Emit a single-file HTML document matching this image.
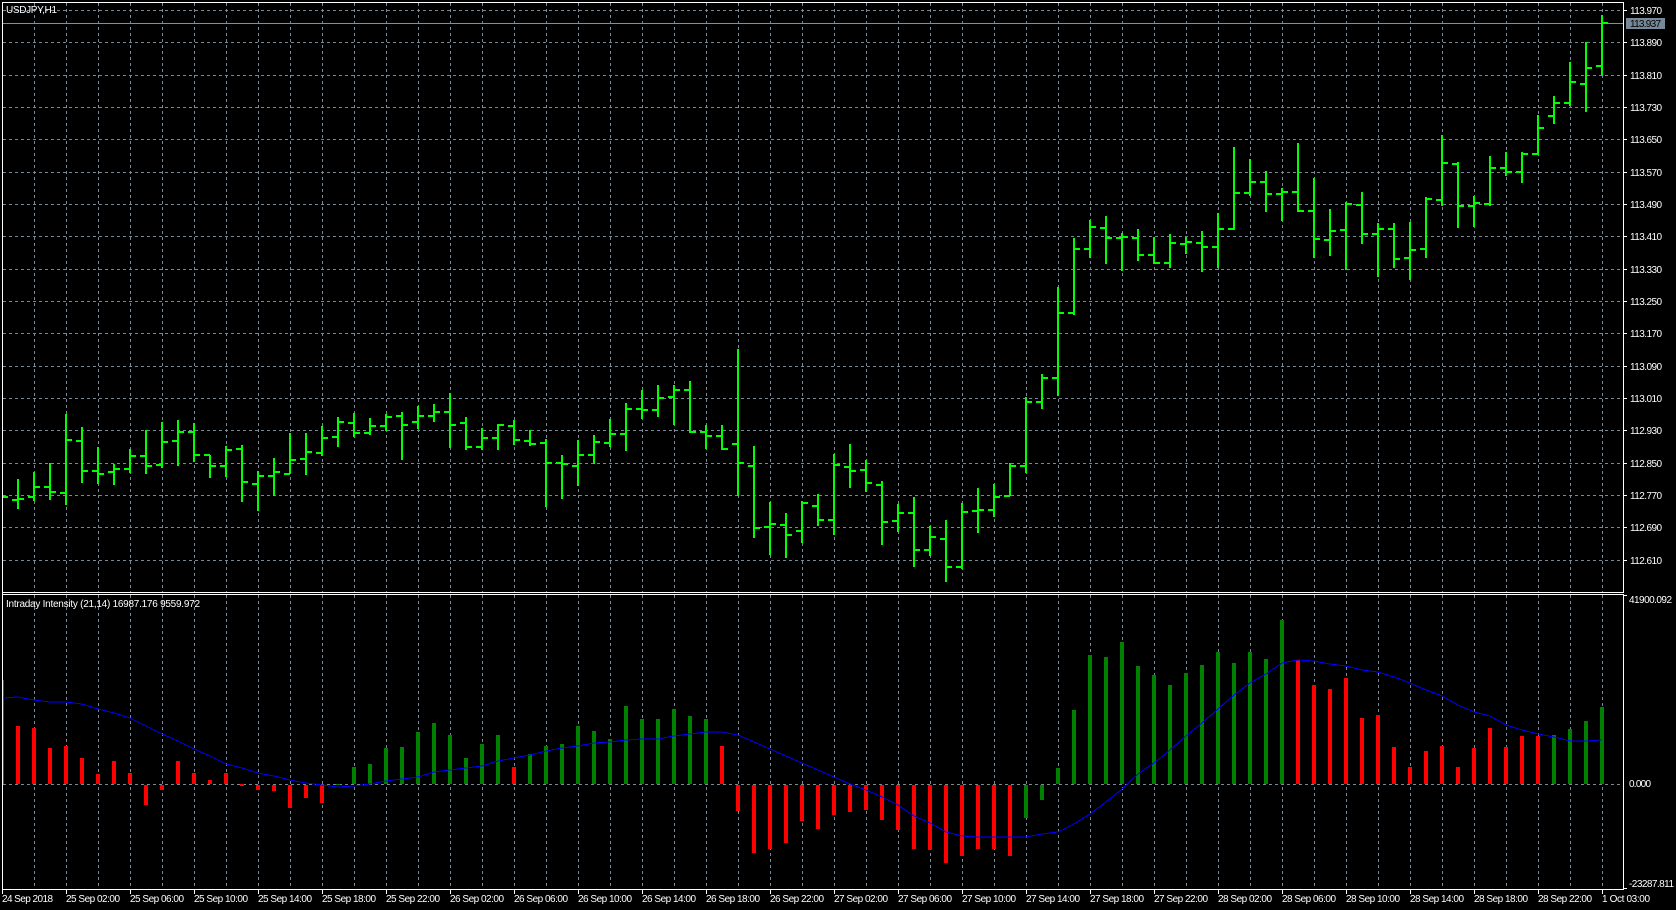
<!DOCTYPE html>
<html>
<head>
<meta charset="utf-8">
<title>USDJPY,H1</title>
<style>
html,body{margin:0;padding:0;background:#000;width:1676px;height:910px;overflow:hidden}
svg{display:block;position:absolute;left:0;top:0}
text{font-family:"Liberation Sans",sans-serif;font-size:10px;fill:#fff}
</style>
</head>
<body>
<svg width="1676" height="910" viewBox="0 0 1676 910" xmlns="http://www.w3.org/2000/svg">
<rect width="1676" height="910" fill="#000"/>

<!-- grid -->
<g shape-rendering="crispEdges" fill="none" stroke="#778899" stroke-width="1" stroke-dasharray="3 3">
<path d="M3 10.5H1623M3 42.5H1623M3 75.5H1623M3 107.5H1623M3 139.5H1623M3 172.5H1623M3 204.5H1623M3 236.5H1623M3 269.5H1623M3 301.5H1623M3 333.5H1623M3 366.5H1623M3 398.5H1623M3 430.5H1623M3 463.5H1623M3 495.5H1623M3 527.5H1623M3 560.5H1623"/>
<path d="M34.5 3V592M66.5 3V592M98.5 3V592M130.5 3V592M162.5 3V592M194.5 3V592M226.5 3V592M258.5 3V592M290.5 3V592M322.5 3V592M354.5 3V592M386.5 3V592M418.5 3V592M450.5 3V592M482.5 3V592M514.5 3V592M546.5 3V592M578.5 3V592M610.5 3V592M642.5 3V592M674.5 3V592M706.5 3V592M738.5 3V592M770.5 3V592M802.5 3V592M834.5 3V592M866.5 3V592M898.5 3V592M930.5 3V592M962.5 3V592M994.5 3V592M1026.5 3V592M1058.5 3V592M1090.5 3V592M1122.5 3V592M1154.5 3V592M1186.5 3V592M1218.5 3V592M1250.5 3V592M1282.5 3V592M1314.5 3V592M1346.5 3V592M1378.5 3V592M1410.5 3V592M1442.5 3V592M1474.5 3V592M1506.5 3V592M1538.5 3V592M1570.5 3V592M1602.5 3V592"/>
<path d="M34.5 595V889M66.5 595V889M98.5 595V889M130.5 595V889M162.5 595V889M194.5 595V889M226.5 595V889M258.5 595V889M290.5 595V889M322.5 595V889M354.5 595V889M386.5 595V889M418.5 595V889M450.5 595V889M482.5 595V889M514.5 595V889M546.5 595V889M578.5 595V889M610.5 595V889M642.5 595V889M674.5 595V889M706.5 595V889M738.5 595V889M770.5 595V889M802.5 595V889M834.5 595V889M866.5 595V889M898.5 595V889M930.5 595V889M962.5 595V889M994.5 595V889M1026.5 595V889M1058.5 595V889M1090.5 595V889M1122.5 595V889M1154.5 595V889M1186.5 595V889M1218.5 595V889M1250.5 595V889M1282.5 595V889M1314.5 595V889M1346.5 595V889M1378.5 595V889M1410.5 595V889M1442.5 595V889M1474.5 595V889M1506.5 595V889M1538.5 595V889M1570.5 595V889M1602.5 595V889"/>
</g>

<!-- bid line -->
<rect x="3" y="23" width="1620" height="1" fill="#8c8c8c" shape-rendering="crispEdges"/>

<!-- price bars -->
<path shape-rendering="crispEdges" fill="none" stroke="#00ff00" stroke-width="2" d="M3 497H8
M18 479V509M12 500H18M18 499H24
M34 472V501M28 497H34M34 487H40
M50 463V500M44 487H50M50 492H56
M66 414V505M60 493H66M66 440H72
M82 427V483M76 441H82M82 471H88
M98 447V484M92 471H98M98 474H104
M114 464V485M108 472H114M114 469H120
M130 449V473M124 469H130M130 456H136
M146 430V474M140 456H146M146 466H152
M162 422V468M156 465H162M162 442H168
M178 420V466M172 441H178M178 432H184
M194 423V462M188 432H194M194 455H200
M210 455V478M204 455H210M210 466H216
M226 446V477M220 466H226M226 450H232
M242 445V502M236 449H242M242 482H248
M258 471V511M252 484H258M258 476H264
M274 458V496M268 476H274M274 472H280
M290 433V474M284 474H290M290 460H296
M306 433V475M300 459H306M306 452H312
M322 426V456M316 453H322M322 438H328
M338 417V447M332 437H338M338 422H344
M354 413V437M348 423H354M354 433H360
M370 418V435M364 433H370M370 426H376
M386 414V431M380 426H386M386 417H392
M402 412V460M396 416H402M402 425H408
M418 406V429M412 422H418M418 416H424
M434 404V422M428 416H434M434 412H440
M450 393V448M444 412H450M450 425H456
M466 417V450M460 423H466M466 447H472
M482 428V450M476 447H482M482 438H488
M498 424V450M492 438H498M498 425H504
M514 420V445M508 426H514M514 440H520
M530 430V446M524 441H530M530 444H536
M546 439V507M540 443H546M546 463H552
M562 455V499M556 463H562M562 464H568
M578 440V486M572 466H578M578 455H584
M594 435V464M588 455H594M594 442H600
M610 419V447M604 443H610M610 434H616
M626 403V451M620 434H626M626 409H632
M642 390V419M636 409H642M642 410H648
M658 385V417M652 410H658M658 398H664
M674 385V425M668 397H674M674 390H680
M690 381V433M684 390H690M690 432H696
M706 425V449M700 432H706M706 436H712
M722 425V450M716 436H722M722 449H728
M738 349V496M732 444H738M738 463H744
M754 446V538M748 466H754M754 528H760
M770 502V555M764 527H770M770 524H776
M786 513V558M780 525H786M786 535H792
M802 501V543M796 531H802M802 503H808
M818 494V526M812 506H818M818 520H824
M834 454V535M828 520H834M834 465H840
M850 444V488M844 467H850M850 471H856
M866 460V492M860 470H866M866 483H872
M882 481V545M876 485H882M882 522H888
M898 504V532M892 521H898M898 513H904
M914 497V567M908 513H914M914 550H920
M930 526V556M924 550H930M930 537H936
M946 520V582M940 539H946M946 567H952
M962 503V569M956 567H962M962 512H968
M978 488V533M972 511H978M978 510H984
M994 484V517M988 510H994M994 497H1000
M1010 463V496M1004 496H1010M1010 466H1016
M1026 397V473M1020 466H1026M1026 402H1032
M1042 374V409M1036 402H1042M1042 378H1048
M1058 287V396M1052 378H1058M1058 313H1064
M1074 238V315M1068 313H1074M1074 249H1080
M1090 220V258M1084 249H1090M1090 227H1096
M1106 216V264M1100 228H1106M1106 238H1112
M1122 233V271M1116 238H1122M1122 237H1128
M1138 229V261M1132 238H1138M1138 255H1144
M1154 237V264M1148 255H1154M1154 263H1160
M1170 234V268M1164 263H1170M1170 243H1176
M1186 237V254M1180 244H1186M1186 242H1192
M1202 231V272M1196 243H1202M1202 247H1208
M1218 213V268M1212 247H1218M1218 229H1224
M1234 147V230M1228 229H1234M1234 193H1240
M1250 159V196M1244 193H1250M1250 182H1256
M1266 171V212M1260 182H1266M1266 194H1272
M1282 188V221M1276 194H1282M1282 192H1288
M1298 143V212M1292 192H1298M1298 211H1304
M1314 178V258M1308 211H1314M1314 239H1320
M1330 209V256M1324 240H1330M1330 231H1336
M1346 202V270M1340 230H1346M1346 204H1352
M1362 192V244M1356 205H1362M1362 234H1368
M1378 223V277M1372 234H1378M1378 229H1384
M1394 223V268M1388 229H1394M1394 259H1400
M1410 222V280M1404 258H1410M1410 250H1416
M1426 197V258M1420 249H1426M1426 199H1432
M1442 135V206M1436 200H1442M1442 163H1448
M1458 162V228M1452 164H1458M1458 206H1464
M1474 196V227M1468 206H1474M1474 203H1480
M1490 156V206M1484 204H1490M1490 168H1496
M1506 152V176M1500 168H1506M1506 172H1512
M1522 152V183M1516 172H1522M1522 154H1528
M1538 115V155M1532 154H1538M1538 128H1544
M1554 96V124M1548 116H1554M1554 103H1560
M1570 62V106M1564 103H1570M1570 82H1576
M1586 42V112M1580 84H1586M1586 68H1592
M1602 15V76M1596 66H1602M1602 23H1608"/>

<!-- zero line -->
<path shape-rendering="crispEdges" fill="none" stroke="#778899" stroke-width="1" stroke-dasharray="3 3" d="M3 784.5H1623"/>

<!-- histogram -->
<path shape-rendering="crispEdges" fill="none" stroke="#ff0000" stroke-width="4" d="M18 784V726M34 784V728M50 784V748M66 784V746M82 784V758M98 784V774M114 784V761M130 784V773M146 785V805M162 785V790M178 784V761M194 784V773M210 784V780M226 784V773M242 784V786M258 785V790M274 785V791M290 785V808M306 785V798M322 785V803M514 784V767M722 784V746M738 785V811M754 785V853M770 785V849M786 785V843M802 785V821M818 785V829M834 785V815M850 785V812M866 785V810M882 785V820M898 785V830M914 785V849M930 785V850M946 785V863M962 785V856M978 785V849M994 785V849M1010 785V856M1298 784V660M1314 784V685M1330 784V689M1346 784V678M1362 784V718M1378 784V715M1394 784V747M1410 784V767M1426 784V751M1442 784V746M1458 784V767M1474 784V748M1490 784V728M1506 784V747M1522 784V736M1538 784V736"/>
<path shape-rendering="crispEdges" fill="none" stroke="#008000" stroke-width="4" d="M338 785V784M354 784V767M370 784V764M386 784V748M402 784V747M418 784V732M434 784V723M450 784V735M466 784V758M482 784V744M498 784V735M530 784V754M546 784V746M562 784V744M578 784V726M594 784V731M610 784V739M626 784V706M642 784V719M658 784V719M674 784V709M690 784V716M706 784V719M1026 785V818M1042 785V800M1058 784V768M1074 784V710M1090 784V655M1106 784V657M1122 784V642M1138 784V666M1154 784V675M1170 784V685M1186 784V673M1202 784V665M1218 784V652M1234 784V663M1250 784V652M1266 784V659M1282 784V620M1554 784V735M1570 784V729M1586 784V721M1602 784V707"/>
<rect x="3" y="680" width="1" height="104" fill="#008000" shape-rendering="crispEdges"/>

<!-- signal line -->
<polyline shape-rendering="crispEdges" fill="none" stroke="#0000ff" stroke-width="1" points="3,698 18,697 34,700 50,702 66,702 82,704 98,709 114,713 130,718 146,726 162,734 178,741 194,749 210,756 226,764 242,768 258,773 274,776 290,780 306,783 322,785 338,787 354,786 370,784 386,781 402,779 418,777 434,772 450,770 466,768 482,766 498,761 514,758 530,755 546,751 562,748 578,746 594,743 610,742 626,740 642,739 658,739 674,736 690,734 706,732 722,732 738,735 754,742 770,749 786,756 802,763 818,770 834,777 850,784 866,790 882,797 898,805 914,816 930,823 946,832 962,836 978,837 994,837 1010,837 1026,837 1042,834 1058,832 1074,824 1090,814 1106,802 1122,789 1138,774 1154,763 1170,750 1186,736 1202,723 1218,709 1234,695 1250,683 1266,674 1282,663 1298,660 1314,661 1330,664 1346,666 1362,670 1378,672 1394,677 1410,683 1426,690 1442,696 1458,705 1474,712 1490,716 1506,725 1522,730 1538,734 1554,737 1570,741 1586,741 1602,740"/>

<!-- frame -->
<g shape-rendering="crispEdges" fill="#fff">
<rect x="2" y="2" width="1622" height="1"/>
<rect x="2" y="2" width="1" height="888"/>
<rect x="1623" y="2" width="1" height="591"/>
<rect x="2" y="592" width="1622" height="1"/>
<rect x="2" y="594" width="1622" height="1"/>
<rect x="1623" y="594" width="1" height="296"/>
<rect x="2" y="889" width="1622" height="1"/>
</g>

<!-- axis ticks -->
<path shape-rendering="crispEdges" fill="none" stroke="#fff" stroke-width="1" d="M1623 10.5h4M1623 42.5h4M1623 75.5h4M1623 107.5h4M1623 139.5h4M1623 172.5h4M1623 204.5h4M1623 236.5h4M1623 269.5h4M1623 301.5h4M1623 333.5h4M1623 366.5h4M1623 398.5h4M1623 430.5h4M1623 463.5h4M1623 495.5h4M1623 527.5h4M1623 560.5h4M1623 595.5h4M1623 888.5h4
M2.5 889v5M66.5 889v5M130.5 889v5M194.5 889v5M258.5 889v5M322.5 889v5M386.5 889v5M450.5 889v5M514.5 889v5M578.5 889v5M642.5 889v5M706.5 889v5M770.5 889v5M834.5 889v5M898.5 889v5M962.5 889v5M1026.5 889v5M1090.5 889v5M1154.5 889v5M1218.5 889v5M1282.5 889v5M1346.5 889v5M1410.5 889v5M1474.5 889v5M1538.5 889v5M1602.5 889v5"/>

<!-- bid label -->
<rect x="1626" y="18" width="39" height="11" fill="#778899" shape-rendering="crispEdges"/>
<text x="1630" y="27" textLength="31" style="fill:#000">113.937</text>

<!-- price labels -->
<text x="1630" y="14" textLength="32">113.970</text>
<text x="1630" y="46" textLength="32">113.890</text>
<text x="1630" y="79" textLength="32">113.810</text>
<text x="1630" y="111" textLength="32">113.730</text>
<text x="1630" y="143" textLength="32">113.650</text>
<text x="1630" y="176" textLength="32">113.570</text>
<text x="1630" y="208" textLength="32">113.490</text>
<text x="1630" y="240" textLength="32">113.410</text>
<text x="1630" y="273" textLength="32">113.330</text>
<text x="1630" y="305" textLength="32">113.250</text>
<text x="1630" y="337" textLength="32">113.170</text>
<text x="1630" y="370" textLength="32">113.090</text>
<text x="1630" y="402" textLength="32">113.010</text>
<text x="1630" y="434" textLength="32">112.930</text>
<text x="1630" y="467" textLength="32">112.850</text>
<text x="1630" y="499" textLength="32">112.770</text>
<text x="1630" y="531" textLength="32">112.690</text>
<text x="1630" y="564" textLength="32">112.610</text>

<text x="1629" y="603" textLength="43">41900.092</text>
<text x="1629" y="787" textLength="22">0.000</text>
<text x="1629" y="887" textLength="45">-23287.811</text>

<!-- titles -->
<text x="6" y="13" textLength="51">USDJPY,H1</text>
<text x="6" y="607" textLength="194">Intraday Intensity (21,14) 16987.176 9559.972</text>

<!-- time labels -->
<text x="2" y="902" textLength="51">24 Sep 2018</text>
<text x="66" y="902" textLength="54">25 Sep 02:00</text>
<text x="130" y="902" textLength="54">25 Sep 06:00</text>
<text x="194" y="902" textLength="54">25 Sep 10:00</text>
<text x="258" y="902" textLength="54">25 Sep 14:00</text>
<text x="322" y="902" textLength="54">25 Sep 18:00</text>
<text x="386" y="902" textLength="54">25 Sep 22:00</text>
<text x="450" y="902" textLength="54">26 Sep 02:00</text>
<text x="514" y="902" textLength="54">26 Sep 06:00</text>
<text x="578" y="902" textLength="54">26 Sep 10:00</text>
<text x="642" y="902" textLength="54">26 Sep 14:00</text>
<text x="706" y="902" textLength="54">26 Sep 18:00</text>
<text x="770" y="902" textLength="54">26 Sep 22:00</text>
<text x="834" y="902" textLength="54">27 Sep 02:00</text>
<text x="898" y="902" textLength="54">27 Sep 06:00</text>
<text x="962" y="902" textLength="54">27 Sep 10:00</text>
<text x="1026" y="902" textLength="54">27 Sep 14:00</text>
<text x="1090" y="902" textLength="54">27 Sep 18:00</text>
<text x="1154" y="902" textLength="54">27 Sep 22:00</text>
<text x="1218" y="902" textLength="54">28 Sep 02:00</text>
<text x="1282" y="902" textLength="54">28 Sep 06:00</text>
<text x="1346" y="902" textLength="54">28 Sep 10:00</text>
<text x="1410" y="902" textLength="54">28 Sep 14:00</text>
<text x="1474" y="902" textLength="54">28 Sep 18:00</text>
<text x="1538" y="902" textLength="54">28 Sep 22:00</text>
<text x="1602" y="902" textLength="48">1 Oct 03:00</text>
</svg>
</body>
</html>
